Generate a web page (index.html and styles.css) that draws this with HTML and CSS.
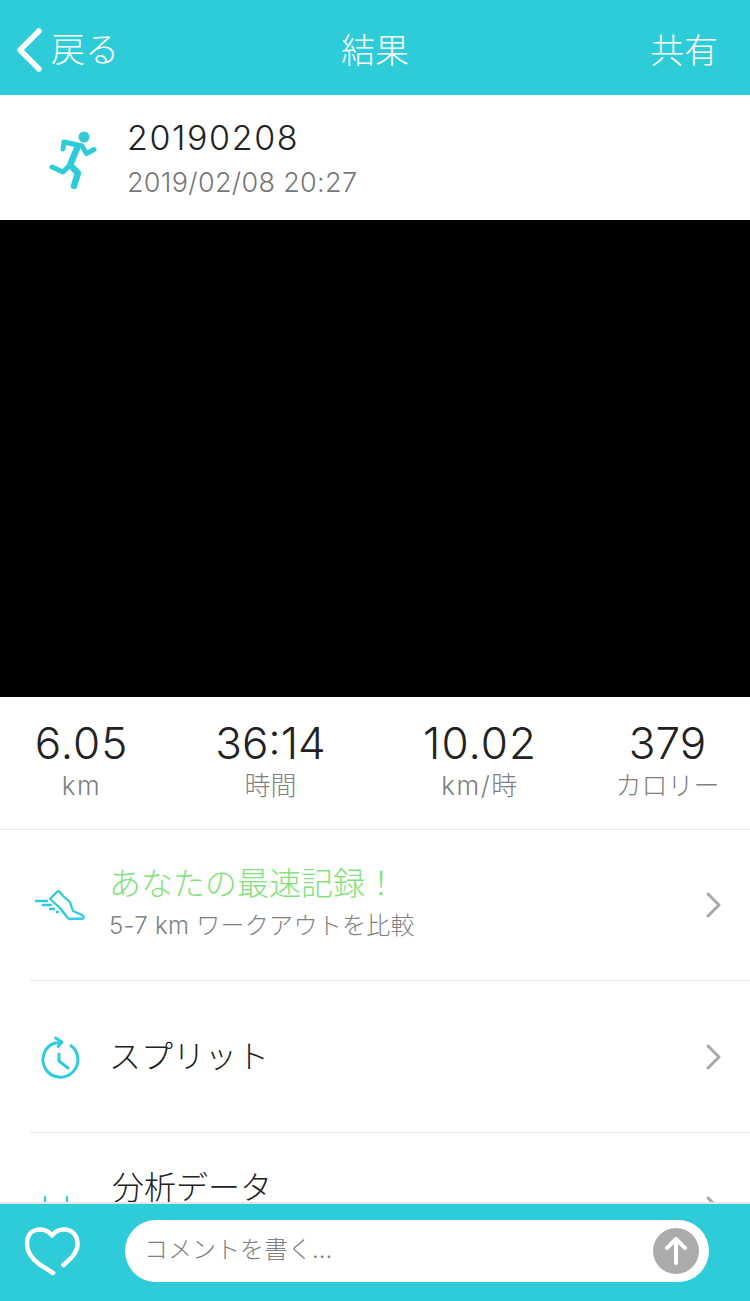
FILE: index.html
```html
<!DOCTYPE html>
<html lang="ja">
<head>
<meta charset="utf-8">
<title>結果</title>
<link rel="stylesheet" href="styles.css">
</head>
<body>
<div class="app">
  <header class="topbar">
    <div class="back">
      <svg class="back-icon" viewBox="0 0 28 44" width="28" height="44"><path d="M24 3 L5 22 L24 41" fill="none" stroke="#fff" stroke-width="5.5" stroke-linecap="round" stroke-linejoin="round"/></svg>
      <span class="back-text">戻る</span>
    </div>
    <div class="title">結果</div>
    <div class="share">共有</div>
  </header>
  <main class="content">
    <section class="summary">
      <div class="summary-icon">
        <svg viewBox="0 0 52 62" width="52" height="62"><circle cx="37" cy="8" r="5.5" fill="#2ecbdb"/><path d="M16 20 L17 13 L35 17 L39.500 24.500 L47 20.500" fill="none" stroke="#2ecbdb" stroke-width="5" stroke-linecap="round" stroke-linejoin="round"/><path d="M31 17 L23 36 L31 44 L27 57" fill="none" stroke="#2ecbdb" stroke-width="6.500" stroke-linecap="round" stroke-linejoin="round"/><path d="M23 36 L16 43 L5 38" fill="none" stroke="#2ecbdb" stroke-width="5" stroke-linecap="round" stroke-linejoin="round"/></svg>
      </div>
      <div class="summary-text">
        <div class="summary-name">20190208</div>
        <div class="summary-date">2019/02/08 20:27</div>
      </div>
    </section>
    <div class="map"></div>
    <section class="stats">
      <div class="stat"><div class="stat-value stat-value-wide">6.05</div><div class="stat-label stat-label-latin">km</div></div>
      <div class="stat"><div class="stat-value">36:14</div><div class="stat-label">時間</div></div>
      <div class="stat"><div class="stat-value stat-value-wide">10.02</div><div class="stat-label stat-label-latin">km/時</div></div>
      <div class="stat stat-last"><div class="stat-value">379</div><div class="stat-label">カロリー</div></div>
    </section>
    <section class="list">
      <div class="row">
        <div class="row-icon">
          <svg class="icon-shoe" viewBox="0 0 56 36" width="56" height="36"><path d="M16 11 L23 4 Q24.500 2.500 26 4 L29 8 L36 14 L39 23 L48 27 Q51 29 49 30.500 L36 31 Q34 31 33 29 L26 20 Z" fill="none" stroke="#2ecbdb" stroke-width="2.300" stroke-linejoin="round"/><path d="M1 13 H14 M8 17 H18 M15 21 H21 M22 24 H25" fill="none" stroke="#2ecbdb" stroke-width="2.300"/></svg>
        </div>
        <div class="row-text">
          <div class="row-best">あなたの最速記録！</div>
          <div class="row-sub">5-7 km ワークアウトを比較</div>
        </div>
        <svg class="chevron" viewBox="0 0 16 26" width="16" height="26"><path d="M2 2 L13 13 L2 24" fill="none" stroke="#a9a9a9" stroke-width="3" stroke-linecap="round" stroke-linejoin="round"/></svg>
      </div>
      <div class="row row-tall">
        <div class="row-icon">
          <svg class="icon-clock" viewBox="0 0 46 46" width="46" height="46"><path d="M17 8 A17.500 17.500 0 1 0 32 10" fill="none" stroke="#2ecbdb" stroke-width="3"/><path d="M17 8 L24 7 M17.500 3 L24 7 L20 11.500" fill="none" stroke="#2ecbdb" stroke-width="2.800" stroke-linecap="round" stroke-linejoin="round"/><path d="M21 19 V26 L30 33" fill="none" stroke="#2ecbdb" stroke-width="3" stroke-linecap="round" stroke-linejoin="round"/></svg>
        </div>
        <div class="row-text"><div class="row-main">スプリット</div></div>
        <svg class="chevron" viewBox="0 0 16 26" width="16" height="26"><path d="M2 2 L13 13 L2 24" fill="none" stroke="#a9a9a9" stroke-width="3" stroke-linecap="round" stroke-linejoin="round"/></svg>
      </div>
      <div class="row row-last">
        <div class="row-icon">
          <svg class="icon-clock" viewBox="0 0 46 46" width="46" height="46"><path d="M7 9 V40 M29 9 V40" fill="none" stroke="#2ecbdb" stroke-width="2.200"/></svg>
        </div>
        <div class="row-text row-text-top"><div class="row-main">分析データ</div></div>
        <svg class="chevron" viewBox="0 0 16 26" width="16" height="26"><path d="M2 2 L13 13 L2 24" fill="none" stroke="#a9a9a9" stroke-width="3" stroke-linecap="round" stroke-linejoin="round"/></svg>
      </div>
    </section>
  </main>
  <footer class="bottombar">
    <svg class="heart" viewBox="0 0 56 50" width="56" height="50"><path d="M29 47 L15 38 C6 31 3 25 3 18 C3 9 8 3.500 16 3.500 C21 3.500 25 5.500 28 9.500 C31 5.500 35 3.500 40 3.500 C48 3.500 53.500 9 53.500 18 C53.500 25 50 30 39.500 39" fill="none" stroke="#fff" stroke-width="4.500" stroke-linecap="round" stroke-linejoin="round"/></svg>
    <div class="comment">
      <span class="comment-text">コメントを書く...</span>
      <span class="send">
        <svg viewBox="0 0 46 46" width="46" height="46"><path d="M23 35 V11 M14 20 L23 11 L32 20" fill="none" stroke="#fff" stroke-width="4" stroke-linecap="round" stroke-linejoin="round"/></svg>
      </span>
    </div>
  </footer>
</div>
</body>
</html>
```
FILE: styles.css
```css
* { box-sizing: border-box; }
html, body { margin: 0; padding: 0; background: #fff; }
body { font-family: "Inter", "Noto Sans CJK JP", sans-serif; font-weight: 300; color: #222; }
.app { width: 750px; height: 1301px; display: flex; flex-direction: column; overflow: hidden; }

.topbar { height: 95px; flex: none; background: #2ecbd9; color: #fff; display: flex; align-items: center; justify-content: space-between; font-size: 34px; padding: 6px 32px 0 15px; position: relative; }
.back { display: flex; align-items: center; gap: 8px; }
.back-icon { margin-top: -1px; }
.back-text { margin-top: -6px; }
.title { position: absolute; left: 0; right: 0; top: 29px; text-align: center; line-height: 44px; }
.share { line-height: 44px; }

.content { flex: 1; overflow: hidden; min-height: 0; }

.summary { height: 125px; display: flex; align-items: center; padding-left: 47px; }
.summary-icon { width: 80px; flex: none; height: 62px; margin-top: 5px; }
.summary-text { display: flex; flex-direction: column; gap: 8px; }
.summary-name { font-size: 34px; line-height: 42px; color: #222; letter-spacing: 1.6px; }
.summary-date { font-size: 27px; line-height: 32px; color: #777; letter-spacing: 0.3px; }

.map { height: 477px; background: #000; }

.stats { height: 133px; border-bottom: 1px solid #e8e8e8; display: grid; grid-template-columns: 163px 215px 204px 168px; padding-top: 20px; }
.stat { text-align: center; }
.stat-last { padding-left: 3px; }
.stat-value { font-size: 44px; line-height: 52px; color: #222; }
.stat-value-wide { letter-spacing: 1px; }
.stat-label { font-size: 26px; line-height: 34px; color: #808080; }
.stat-label-latin { letter-spacing: 1.5px; }

.list { padding-left: 30px; }
.row { height: 151px; border-bottom: 1px solid #e8e8e8; display: flex; align-items: center; padding-right: 28px; }
.row-tall { height: 152px; }
.row-last { border-bottom: 0; }
.row-icon { width: 79px; flex: none; height: 46px; display: flex; align-items: center; margin-top: 2px; }
.icon-shoe { margin-left: 4px; }
.icon-clock { margin-left: 8px; }
.row-text { flex: 1; min-width: 0; }
.row-best { font-size: 32px; line-height: 42px; color: #84e27e; margin-top: -3px; margin-bottom: 3px; }
.row-sub { font-size: 24px; line-height: 36px; color: #808080; letter-spacing: 0.3px; }
.row-main { font-size: 32px; line-height: 44px; color: #222; }
.row-text-top { margin-top: -42px; margin-left: 3px; }
.chevron { flex: none; }

.bottombar { height: 99px; flex: none; background: #2ecbd9; border-top: 2px solid #e6e6e6; display: flex; align-items: center; padding: 0 0 4px 24px; gap: 45px; }
.heart { flex: none; }
.comment { width: 584px; height: 62px; border-radius: 31px; background: #fff; display: flex; align-items: center; justify-content: space-between; padding: 0 10px 0 19px; }
.comment-text { font-size: 24px; color: #808080; margin-top: -7px; }
.send { width: 46px; height: 46px; border-radius: 50%; background: #ababab; display: block; }
.send svg { display: block; }
```
